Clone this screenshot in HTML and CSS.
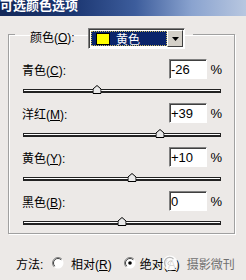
FILE: index.html
```html
<!DOCTYPE html>
<html lang="zh-CN">
<head>
    <meta charset="UTF-8">
    <meta name="viewport" content="width=device-width, initial-scale=1.0">
    <title>可选颜色选项</title>
    <link rel="stylesheet" href="styles.css">
</head>
<body>

    <div class="dialog">
        <div class="titlebar"><span class="title">可选颜色选项</span></div>

        <fieldset class="group">
            <legend>
                <div class="legend-row">
                    <span class="legend-label">颜色(<u>O</u>):</span>
                    <div class="combo">
                        <div class="combo-value"><span class="swatch"></span><span>黄色</span></div>
                        <div class="combo-btn">
                            <svg width="7" height="4" viewBox="0 0 7 4"><path d="M0 0H7L3.5 4Z" fill="#000"/></svg>
                        </div>
                    </div>
                </div>
            </legend>

            <div class="row">
                <div class="line">
                    <label for="cyan">青色(<u>C</u>):</label>
                    <input class="num" id="cyan" type="text" value="-26">
                    <span class="pct">%</span>
                </div>
                <div class="slider">
                    <div class="track">
                        <svg class="thumb" style="left: 37%" width="9" height="9" viewBox="0 0 9 9"><path d="M0.5 8.5V4L4.5 0.5L8.5 4V8.5Z" fill="#e9e9e9" stroke="#000"/></svg>
                    </div>
                </div>
            </div>

            <div class="row">
                <div class="line">
                    <label for="magenta">洋红(<u>M</u>):</label>
                    <input class="num" id="magenta" type="text" value="+39">
                    <span class="pct">%</span>
                </div>
                <div class="slider">
                    <div class="track">
                        <svg class="thumb" style="left: 69.5%" width="9" height="9" viewBox="0 0 9 9"><path d="M0.5 8.5V4L4.5 0.5L8.5 4V8.5Z" fill="#e9e9e9" stroke="#000"/></svg>
                    </div>
                </div>
            </div>

            <div class="row">
                <div class="line">
                    <label for="yellow">黄色(<u>Y</u>):</label>
                    <input class="num" id="yellow" type="text" value="+10">
                    <span class="pct">%</span>
                </div>
                <div class="slider">
                    <div class="track">
                        <svg class="thumb" style="left: 55%" width="9" height="9" viewBox="0 0 9 9"><path d="M0.5 8.5V4L4.5 0.5L8.5 4V8.5Z" fill="#e9e9e9" stroke="#000"/></svg>
                    </div>
                </div>
            </div>

            <div class="row">
                <div class="line">
                    <label for="black">黑色(<u>B</u>):</label>
                    <input class="num" id="black" type="text" value="0">
                    <span class="pct">%</span>
                </div>
                <div class="slider">
                    <div class="track">
                        <svg class="thumb" style="left: 50%" width="9" height="9" viewBox="0 0 9 9"><path d="M0.5 8.5V4L4.5 0.5L8.5 4V8.5Z" fill="#e9e9e9" stroke="#000"/></svg>
                    </div>
                </div>
            </div>
        </fieldset>

        <div class="method">
            <span class="method-label">方法:</span>
            <span class="radio">
                <svg width="12" height="12" viewBox="0 0 12 12">
                    <circle cx="6" cy="6" r="5.5" fill="#fff"/>
                    <path d="M9.9 2.1A5.5 5.5 0 0 0 2.1 9.9" stroke="#808080" fill="none"/>
                    <path d="M9.2 2.8A4.5 4.5 0 0 0 2.8 9.2" stroke="#404040" fill="none"/>
                </svg>
            </span>
            <span class="radio-text">相对(<u>R</u>)</span>
            <span class="radio radio-second">
                <svg width="12" height="12" viewBox="0 0 12 12">
                    <circle cx="6" cy="6" r="5.5" fill="#fff"/>
                    <path d="M9.9 2.1A5.5 5.5 0 0 0 2.1 9.9" stroke="#808080" fill="none"/>
                    <path d="M9.2 2.8A4.5 4.5 0 0 0 2.8 9.2" stroke="#404040" fill="none"/>
                    <circle cx="6" cy="6" r="1.8" fill="#000"/>
                </svg>
            </span>
            <span class="radio-text radio-text-tight">绝对(<u>A</u>)</span>
            <span class="watermark">
                <svg width="16" height="16" viewBox="0 0 16 16">
                    <circle cx="8" cy="8" r="7.5" fill="rgba(255,255,255,0.85)"/>
                    <path d="M4 11.5A5 5 0 0 1 11.5 4" stroke="#b8b8b8" stroke-width="1.2" fill="none"/>
                    <path d="M6.5 10A2.5 2.5 0 0 1 10 6.5" stroke="#c8c8c8" fill="none"/>
                </svg>
                <span class="watermark-text">摄影微刊</span>
            </span>
        </div>
    </div>

</body>
</html>
```

FILE: styles.css
```css
body {
    margin: 0;
    background-color: #ece9e7;
    font-family: "Liberation Sans", "Noto Sans CJK SC", sans-serif;
    font-size: 12px;
    color: #000;
}
.dialog {
    width: 246px;
    height: 280px;
    overflow: hidden;
}
.titlebar {
    height: 16px;
    overflow: hidden;
    background: linear-gradient(90deg, #13285a 0%, #1c3772 30%, #3d5d9c 55%, #8aa3cf 78%, #b8c7e0 100%);
}
.title {
    display: block;
    margin-top: -2px;
    font-family: "Noto Sans CJK SC", sans-serif;
    font-size: 13px;
    font-weight: bold;
    line-height: 13px;
    color: #fff;
}
.group {
    width: 227px;
    box-sizing: border-box;
    margin: 12px 0 0 8px;
    padding: 19px 12px 0 13px;
    border: 1px solid #a0a0a0;
    box-shadow: inset 1px 1px 0 #fff, 1px 1px 0 #fff;
}
legend {
    margin-left: -7px;
    padding: 0 8px 0 15px;
}
.legend-row {
    display: flex;
    align-items: flex-start;
    height: 12px;
}
.legend-label {
    height: 21px;
    line-height: 21px;
    width: 58px;
}
.combo {
    display: flex;
    width: 97px;
    height: 21px;
    box-sizing: border-box;
    padding: 1px;
    border: 1px solid;
    border-color: #808080 #fff #fff #808080;
    box-shadow: inset 1px 1px 0 #404040;
    background-color: #fff;
}
.combo-value {
    flex: 1;
    display: flex;
    align-items: center;
    margin: 1px 0 1px 1px;
    background-color: #0a246a;
    outline: 1px dotted #c9b860;
    outline-offset: -1px;
    color: #fff;
}
.swatch {
    width: 12px;
    height: 10px;
    margin: 0 6px 0 5px;
    background-color: #ffff00;
    border: 1px solid #000;
}
.combo-btn {
    width: 16px;
    display: flex;
    align-items: center;
    justify-content: center;
    box-sizing: border-box;
    background-color: #d4d0c8;
    border: 1px solid;
    border-color: #fff #404040 #404040 #fff;
}
.row {
    margin-bottom: 2px;
}
.row:last-child {
    margin-bottom: 0;
}
.line {
    display: flex;
    align-items: center;
    height: 20px;
}
.line label {
    flex: 1;
}
.num {
    width: 38px;
    height: 20px;
    box-sizing: border-box;
    margin: 0;
    padding: 1px 0 0 1px;
    border: 1px solid;
    border-color: #808080 #fff #fff #808080;
    box-shadow: inset 1px 1px 0 #404040;
    background-color: #fff;
    font-family: "Liberation Sans", sans-serif;
    font-size: 13px;
    color: #000;
}
.pct {
    width: 15px;
    text-align: right;
    font-size: 13px;
}
.slider {
    display: flex;
    align-items: center;
    height: 20px;
    margin-top: 2px;
}
.track {
    position: relative;
    width: 198px;
    height: 4px;
    margin-left: 1px;
    box-sizing: border-box;
    border: 1px solid #222;
    border-bottom-width: 2px;
    background-color: #fff;
}
.thumb {
    position: absolute;
    top: -5px;
    transform: translateX(-50%);
}
.method {
    display: flex;
    align-items: center;
    height: 16px;
    margin: 21px 0 0 16px;
}
.method-label {
    width: 36px;
}
.radio {
    display: flex;
}
.radio-text {
    margin-left: 7px;
}
.radio-second {
    margin-left: 12px;
}
.radio-text-tight {
    margin-left: 4px;
}
.watermark {
    display: flex;
    align-items: center;
    margin-left: -18px;
}
.watermark-text {
    margin-left: 9px;
    color: #707070;
}
```
